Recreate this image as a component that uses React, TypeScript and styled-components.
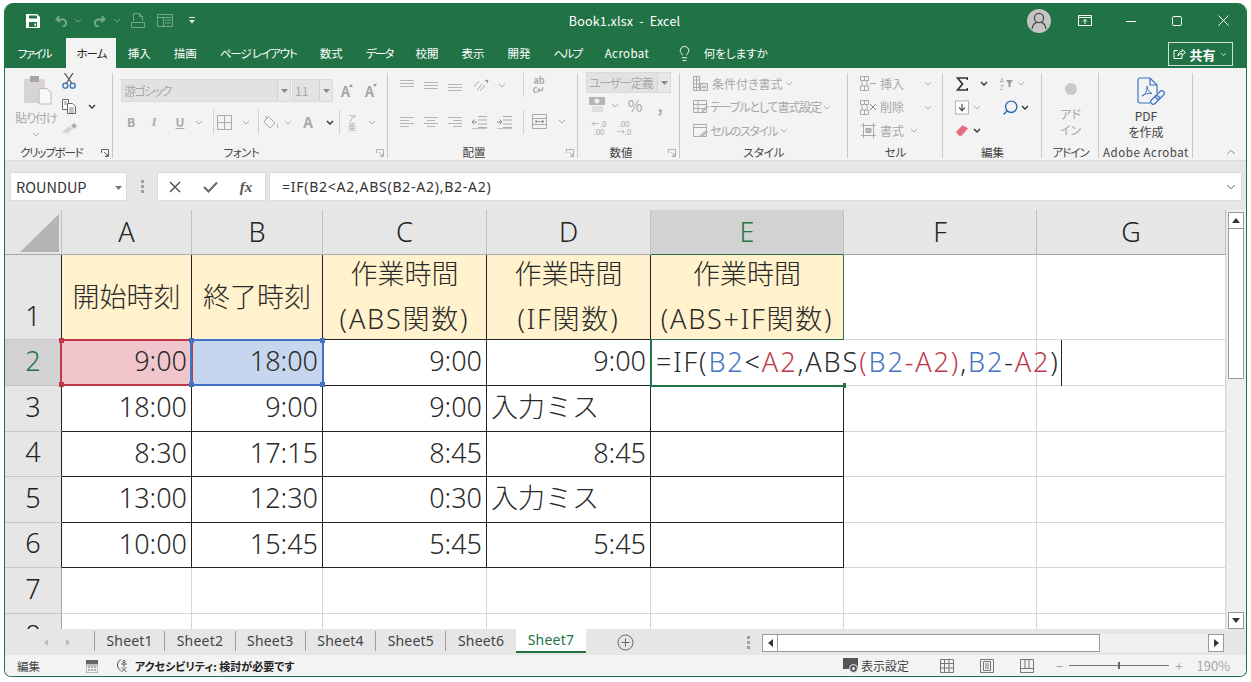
import React from "react";
import styled, { createGlobalStyle } from "styled-components";
import { Lightbulb, Search, ChevronDown, ChevronUp } from "lucide-react";

const FONT = `"Noto Sans CJK JP", "Noto Sans", sans-serif`;
const CELLFONT = `"Noto Sans", "Noto Sans CJK JP", sans-serif`;
const GREEN = "#217346";
const DIM = "#a8a8a8";

const Global = createGlobalStyle`
  html, body { margin: 0; padding: 0; background: #fff; font-family: ${FONT}; }
  * { box-sizing: border-box; }
`;

const Win = styled.div`
  width: 1243px; height: 674px; margin: 3px 0 0 4px; border: 1px solid ${GREEN}; border-top: 0;
  border-radius: 9px 9px 7px 7px; overflow: hidden; display: flex; flex-direction: column; background: #f3f3f3;
  position: relative; font-feature-settings: "palt";
`;
const TitleBar = styled.div`
  height: 35px; flex: none; background: ${GREEN}; color: #fff; display: grid;
  grid-template-columns: 1fr auto 1fr; align-items: center; font-size: 12.5px;
`;
const Qat = styled.div`display: flex; align-items: center; padding-left: 16px;`;
const QatSlot = styled.span<{ $w: number; $ml?: number }>`width: ${p => p.$w}px; margin-left: ${p => p.$ml || 0}px; display: flex; justify-content: center; align-items: center; flex: none;`;
const Title = styled.div`letter-spacing: .2px; white-space: pre; padding-right: 2px;`;
const WinControls = styled.div`display: flex; align-items: center; justify-content: flex-end;`;
const WinSlot = styled.span<{ $w: number }>`width: ${p => p.$w}px; display: flex; justify-content: center; align-items: center;`;
const Avatar = styled.span`
  width: 24px; height: 24px; border-radius: 50%; background: #c4c4c4; display: flex; align-items: center; justify-content: center; margin-right: 11px;
`;

const TabRow = styled.div`height: 30px; flex: none; background: ${GREEN}; display: flex; padding-left: 1px; position: relative;`;
const Tab = styled.div<{ $active?: boolean; $ls?: number }>`
  padding: 0 ${p => p.$active ? 10 : 11.5}px; height: 30px; line-height: 30px; font-size: 11.5px; white-space: nowrap; flex: none;
  letter-spacing: ${p => p.$ls || 0}px;
  color: ${p => p.$active ? "#222" : "#fff"}; background: ${p => p.$active ? "#f3f3f3" : "transparent"};
  ${p => p.$active ? "margin-left: 4px;" : ""}
`;
const TellMe = styled.div`display: flex; align-items: center; gap: 11px; color: #fff; font-size: 11.5px; margin-left: 15px;`;
const Share = styled.div`
  position: absolute; right: 13px; top: 4px; width: 65px; height: 24px; border: 1px solid #cfe0d6; color: #fff;
  display: flex; align-items: center; justify-content: center; gap: 3px; font-size: 13px; font-weight: 700;
`;

const Ribbon = styled.div`height: 93px; flex: none; display: flex; background: #f3f3f3; border-bottom: 1px solid #dcdcdc; position: relative;`;
const Group = styled.div<{ $w: number }>`
  width: ${p => p.$w}px; flex: none; display: flex; flex-direction: column; position: relative;
  &::after { content: ""; position: absolute; right: 0; top: 5px; bottom: 2px; width: 1px; background: #c8c8c8; }
`;
const GroupBody = styled.div`flex: 1; display: flex; min-height: 0;`;
const GroupLabel = styled.div<{ $pl?: number; $pr?: number; $ls?: number }>`
  height: 19px; padding-top: 4px; line-height: 15px; font-size: 11.5px; color: #444; white-space: nowrap;
  text-align: ${p => p.$pl ? "left" : "center"}; padding-left: ${p => p.$pl || 0}px; padding-right: ${p => p.$pr || 0}px;
  letter-spacing: ${p => p.$ls || 0}px;
`;
const Launcher = styled.span`position: absolute; right: 4px; bottom: 3px; line-height: 0;`;
const Col = styled.div<{ $w?: number; $pad?: number; $top?: number }>`
  display: flex; flex-direction: column; flex: none;
  ${p => p.$w ? `width:${p.$w}px;` : ""} ${p => p.$pad ? `padding-left:${p.$pad}px;` : ""} ${p => p.$top ? `padding-top:${p.$top}px;` : ""}
`;
const Row = styled.div<{ $h: number }>`height: ${p => p.$h}px; display: flex; align-items: center; flex: none;`;
const Slot = styled.span<{ $w: number; $pl?: number }>`width: ${p => p.$w}px; padding-left: ${p => p.$pl || 0}px; flex: none; display: flex; justify-content: center; align-items: center; line-height: 0;`;
const VLine = styled.span`width: 1px; height: 24px; background: #d2d2d2; flex: none;`;
const Dim = styled.span<{ $size?: number; $dark?: boolean; $w?: number; $bold?: boolean; $ml?: number; $ls?: number }>`
  font-size: ${p => p.$size || 12}px; color: ${p => p.$dark ? "#555" : DIM}; white-space: nowrap; line-height: 14px;
  letter-spacing: ${p => p.$ls || 0}px;
  ${p => p.$bold ? "font-weight:700;" : ""} ${p => p.$w ? `width:${p.$w}px;` : ""} ${p => p.$ml ? `margin-left:${p.$ml}px;` : ""}
`;
const TinyNum = styled(Dim)`font-size: 8px; line-height: 8px; white-space: normal; width: 16px; text-align: center;`;
const WrapIco = styled(Dim)`font-size: 9px; line-height: 9px; white-space: normal; width: 14px; text-align: center;`;
const Phonetic = styled(Dim)`font-size: 8px; line-height: 9px; white-space: normal; width: 10px; text-align: center;`;
const ItalicMark = styled(Dim)`font-style: italic; font-family: "Liberation Serif", serif;`;
const UnderMark = styled(Dim)`text-decoration: underline;`;
const Combo = styled.div<{ $w: number; $h: number; $ml?: number; $ls?: number }>`
  width: ${p => p.$w}px; height: ${p => p.$h}px; margin-left: ${p => p.$ml || 0}px; background: #e2e2e2; border: 1px solid #dadada; flex: none; display: flex; align-items: center; font-size: 12px; color: ${DIM}; padding-left: 2px; position: relative; white-space: nowrap;
  letter-spacing: ${p => p.$ls || 0}px;
`;
const ComboArrow = styled.span`
  position: absolute; right: 0; top: 0; bottom: 0; width: 13px; background: #e8e8e8; border-left: 1px solid #d2d2d2; display: flex; align-items: center; justify-content: center;
`;
const Stack = styled.div<{ $top: number; $dark?: boolean }>`
  width: 100%; position: relative; padding-top: ${p => p.$top}px; display: flex; flex-direction: column; align-items: center;
  font-size: 12px; line-height: 15.5px; color: ${p => p.$dark ? "#444" : DIM}; text-align: center; white-space: nowrap;
`;
const AddinDotEl = styled.span`position: absolute; top: 15px; left: 50%; margin-left: -6px; width: 12px; height: 12px; border-radius: 50%; background: #c9c9c9;`;
const Collapse = styled.span`position: absolute; right: 8px; bottom: 1px; line-height: 0;`;
const PdfWrap = styled.span`margin-left: 9px; line-height: 0; margin-bottom: 2px;`;

const FormulaRow = styled.div`height: 49px; flex: none; background: #e6e6e6; display: flex; align-items: flex-start; padding: 11px 0 0 5px;`;
const NameBox = styled.div`
  width: 117px; height: 29px; background: #fff; border: 1px solid #dcdcdc; display: flex; align-items: center; padding-left: 5px; font-size: 14.5px; color: #333; position: relative;
`;
const ComboTri = styled.span`position: absolute; right: 4px; top: 11px; line-height: 0;`;
const Grip = styled.div`width: 30px; display: flex; justify-content: center; align-items: center; height: 29px;`;
const FxBox = styled.div`
  width: 109px; height: 29px; background: #fff; border: 1px solid #dcdcdc; display: flex; align-items: center;
`;
const FormulaInput = styled.div`
  margin-left: 3px; width: 973px; height: 29px; background: #fff; border: 1px solid #dcdcdc; display: flex; align-items: center; padding-left: 12px; font-family: ${CELLFONT}; font-size: 14px; color: #333; position: relative; letter-spacing: .75px;
`;
const FormulaArrow = styled.span`position: absolute; right: 3px; top: 7px; line-height: 0;`;

const SheetArea = styled.div`height: 419px; flex: none; display: flex; background: #fff;`;
const Grid = styled.div`
  width: 1221px; height: 419px; overflow: hidden; display: grid; flex: none;
  grid-template-columns: 57px 130px 131px 164px 164px 193px 193px 189px;
  grid-template-rows: 45px 85px 46px 46px 45px 46px 45px 46px 46px;
  font-family: ${CELLFONT}; font-size: 27px; color: #2a2a2a; font-weight: 300; font-feature-settings: normal;
`;
const Corner = styled.div`background: #e6e6e6; border-right: 1px solid #c0c0c0; border-bottom: 1px solid #a8a8a8; position: relative;`;
const CornerTri = styled.span`
  position: absolute; right: 2px; bottom: 2px; width: 0; height: 0; border-left: 39px solid transparent; border-bottom: 38px solid #b5b5b5;
`;
const ColHead = styled.div<{ $sel?: boolean }>`
  background: ${p => p.$sel ? "#d2d2d2" : "#e6e6e6"}; color: ${p => p.$sel ? GREEN : "#222"};
  border-right: 1px solid #c0c0c0; border-bottom: 1px solid ${p => p.$sel ? GREEN : "#a8a8a8"};
  display: flex; align-items: center; justify-content: center; line-height: 1; padding-bottom: 2px;
`;
const RowHead = styled.div<{ $sel?: boolean; $boxed?: boolean; $bottom?: boolean }>`
  background: ${p => p.$sel ? "#d2d2d2" : "#e6e6e6"}; color: ${p => p.$sel ? GREEN : "#222"};
  border-right: 1px solid ${p => p.$sel ? GREEN : p.$boxed ? "#222" : "#a8a8a8"}; border-bottom: 1px solid #c6c6c6;
  display: flex; align-items: ${p => p.$bottom ? "flex-end" : "center"}; justify-content: center; line-height: 44px; padding-bottom: ${p => p.$bottom ? 1 : 4}px;
`;
const Cell = styled.div<{ $bg?: string; $line?: string; $align?: string; $boxed?: boolean }>`
  position: relative; background: ${p => p.$bg || "#fff"}; white-space: nowrap; line-height: 45px;
  border-right: 1px solid ${p => p.$line || (p.$boxed ? "#222" : "#d6d6d6")}; border-bottom: 1px solid ${p => p.$line || (p.$boxed ? "#222" : "#d6d6d6")};
  display: flex; flex-direction: column; justify-content: center;
  align-items: ${p => p.$align === "right" ? "flex-end" : p.$align === "center" ? "center" : "flex-start"};
  padding: 0 4px 4px;
`;
const HeadCell = styled(Cell)`padding-bottom: 2px;`;
const HeadLine = styled.span<{ $wide?: boolean }>`letter-spacing: ${p => p.$wide ? 1.8 : 0}px;`;
const EditCell = styled(Cell)`
  z-index: 2; overflow: visible; background: transparent; border-right: 0; padding-left: 5px; border-bottom: 0;
`;
const EditText = styled.span`z-index: 3; letter-spacing: 1.85px;`;
const Ref = styled.span<{ $c: string }>`color: ${p => p.$c};`;
const Caret = styled.span`position: absolute; top: 0; bottom: 0; left: 410px; width: 1px; background: #222;`;
const RangeMark = styled.span<{ $c: string }>`
  position: absolute; left: -2px; right: -2px; top: -1px; bottom: -1px; border: 2px solid ${p => p.$c}; pointer-events: none; z-index: 2;
`;
const Handle = styled.i<{ $c: string; $x: "l" | "r"; $y: "t" | "b" }>`
  position: absolute; width: 5px; height: 5px; background: ${p => p.$c}; ${p => p.$x === "l" ? "left:-3px;" : "right:-3px;"} ${p => p.$y === "t" ? "top:-3px;" : "bottom:-3px;"}
`;
const EditMark = styled.span`
  position: absolute; left: -1px; top: -1px; width: 194px; bottom: -1px; border-left: 2px solid ${GREEN}; border-bottom: 2px solid ${GREEN}; z-index: 2;
`;
const EditOuter = styled.span`
  position: absolute; right: -2px; bottom: -3px; width: 3px; height: 5px; background: ${GREEN};
`;

const VScroll = styled.div`width: 20px; flex: none; background: #f0f0f0; display: flex; flex-direction: column; padding: 2px 2px 0 1px; border-left: 1px solid #e6e6e6;`;
const ScrollBtn = styled.div`
  height: 17px; background: #fff; border: 1px solid #9a9a9a; display: flex; align-items: center; justify-content: center; flex: none;
`;
const VThumb = styled.div`height: 150px; background: #fff; border: 1px solid #9a9a9a; border-top: 0; flex: none;`;
const VTrack = styled.div`flex: 1;`;

const SheetRow = styled.div`height: 26px; flex: none; background: #e6e6e6; display: flex; align-items: flex-start; position: relative;`;
const NavArrows = styled.div`width: 89px; display: flex; justify-content: center; gap: 18px; height: 26px; align-items: center; padding-left: 15px; flex: none;`;
const SheetTab = styled.div<{ $active?: boolean }>`
  width: 70.3px; flex: none; text-align: center; font-family: ${CELLFONT}; font-size: 14px; letter-spacing: .2px; color: ${p => p.$active ? GREEN : "#444"};
  ${p => p.$active
    ? `height: 24px; line-height: 21px; background: #fff; border-bottom: 2px solid ${GREEN};`
    : "height: 20px; margin-top: 2px; line-height: 19px; border-left: 1px solid #9e9e9e;"}
`;
const AddSheet = styled.span`margin-left: 31px; height: 26px; display: flex; align-items: center; flex: none;`;
const HScroll = styled.div`margin-left: 12px; display: flex; align-items: center; height: 18px; margin-top: 5px; background: #f0f0f0; width: 462px; flex: none;`;
const HBtn = styled.div`width: 16px; height: 18px; background: #fff; border: 1px solid #9a9a9a; display: flex; align-items: center; justify-content: center; flex: none;`;
const HThumb = styled.div`width: 322px; height: 18px; background: #fff; border: 1px solid #9a9a9a; border-left: 0; flex: none;`;
const HTrack = styled.div`flex: 1;`;
const HGrip = styled.span`margin-left: 113px; height: 26px; display: flex; align-items: center;`;

const StatusBar = styled.div`flex: 1; background: #f3f3f3; display: flex; align-items: center; font-size: 11.5px; color: #444; padding-left: 12px;`;
const StatusGroup = styled.div<{ $gap?: number; $ml?: number }>`display: flex; align-items: center; gap: ${p => p.$gap || 0}px; margin-left: ${p => p.$ml || 0}px; flex: none;`;
const StatusBold = styled.span`font-size: 11px; color: #222; font-weight: 700; white-space: nowrap;`;
const StatusText = styled.span`font-size: 12px;`;
const Zoom = styled.span`font-size: 13px; color: ${DIM};`;
const SliderTrack = styled.span`width: 100px; height: 1px; background: #777; position: relative; display: block;`;
const SliderThumb = styled.i`position: absolute; left: 49px; top: -3px; width: 2px; height: 7px; background: #666;`;
const FxText = styled.span`font-family: "Liberation Serif", serif; font-style: italic; font-size: 15px; color: #555; font-weight: 700;`;
const FontABox = styled.span`position: relative; display: inline-block; line-height: 14px; font-size: 14px; color: #a4a4a4; font-weight: 700;`;
const FontACaret = styled.svg`position: absolute; right: -3px; top: 0;`;
const MirrorSearch = styled(Search)`transform: scaleX(-1);`;

/* ---------- icons ---------- */
const Chev = ({ dark, c }: { dark?: boolean; c?: string }) => (
  <svg width="8" height="5" viewBox="0 0 8 5"><path d="M1 1l3 3 3-3" fill="none" stroke={c || (dark ? "#333" : "#aaa")} strokeWidth={dark ? 1.4 : 1} /></svg>
);
const Tri = ({ c = "#8a8a8a" }: { c?: string }) => <svg width="7" height="4" viewBox="0 0 7 4"><path d="M0 0h7L3.5 4z" fill={c} /></svg>;
const LaunchIco = ({ dark }: { dark?: boolean }) => (
  <svg width="8" height="8" viewBox="0 0 8 8" fill="none" stroke={dark ? "#555" : "#aaa"} strokeWidth=".9"><path d="M.5 4V.5h7v7H4M3 3l4 4M7 4.5V7H4.5" /></svg>
);
const Lines = ({ a, w = 14 }: { a: "l" | "c" | "r" | "tt" | "tm" | "tb"; w?: number }) => {
  const ys = a === "tt" ? [2, 5, 8] : a === "tm" ? [4, 7, 10] : a === "tb" ? [6, 9, 12] : [2, 5, 8, 11];
  return <svg width={w} height="14" viewBox="0 0 14 14" stroke="#b5b5b5" strokeWidth="1">
    {ys.map((y, i) => {
      const short = a.startsWith("t") ? false : i % 2 === 1;
      const x1 = a === "r" && short ? 5 : a === "c" && short ? 3 : 0;
      const x2 = a === "l" && short ? 9 : a === "c" && short ? 11 : 14;
      return <path key={y} d={`M${x1} ${y + .5}H${x2}`} />;
    })}
  </svg>;
};
const Floppy = () => (
  <svg width="14" height="14" viewBox="0 0 14 14"><path d="M0 0h11l3 3v11H0z" fill="#fff" /><path d="M3 1.500h8v3H3zM3 8h8v5H3z" fill={GREEN} /><path d="M8.500 9.500h1.500v2.500H8.500z" fill="#fff" /></svg>
);
const UndoSvg = styled.svg<{ $flip?: boolean }>`${p => p.$flip ? "transform: scaleX(-1);" : ""}`;
const Undo = ({ flip }: { flip?: boolean }) => (
  <UndoSvg $flip={flip} width="15" height="12" viewBox="0 0 15 12" fill="none" stroke="#75a78b" strokeWidth="2"><path d="M4 1L1.500 4.500 5 7M2 4.500h7a4 4 0 0 1 0 7H7" /></UndoSvg>
);
const NewDoc = () => (
  <svg width="14" height="15" viewBox="0 0 14 15" fill="none" stroke="#75a78b"><path d="M2.500 8V.5h6l3 3V8M8.500.5v3h3M.5 9.500h13v5H.5z" /></svg>
);
const FormIco = () => (
  <svg width="16" height="13" viewBox="0 0 16 13" fill="none" stroke="#75a78b"><path d="M.5.5h15v12H.5zM.5 3.500h15M6.500 3.500v9M8 6h6M8 9h6" /></svg>
);
const QatMore = () => <svg width="6" height="7" viewBox="0 0 6 7" fill="#dfeee6"><path d="M0 0h6v1H0zM0 3h6L3 6.500z" /></svg>;
const Person = () => (
  <svg width="16" height="18" viewBox="0 0 16 18" fill="none" stroke="#4a4a4a" strokeWidth="1.300"><circle cx="8" cy="6" r="4.600" /><path d="M1 17c.5-4 3-6 4.500-6.600M15 17c-.5-4-3-6-4.500-6.600" /></svg>
);
const RibbonDisp = () => (
  <svg width="14" height="11" viewBox="0 0 14 11" fill="none" stroke="#fff"><path d="M.5.5h13v10H.5zM.5 2.500h13M7 9V4.500M5 6.500l2-2 2 2" /></svg>
);
const Minimize = () => <svg width="10" height="10" viewBox="0 0 10 10"><path d="M0 5.500h10" stroke="#fff" /></svg>;
const Maximize = () => <svg width="10" height="10" viewBox="0 0 10 10"><rect x=".5" y=".5" width="9" height="9" rx="1.200" fill="none" stroke="#fff" /></svg>;
const Close = () => <svg width="11" height="11" viewBox="0 0 11 11"><path d="M.5.5l10 10M10.500.5l-10 10" stroke="#fff" /></svg>;
const ShareIco = () => (
  <svg width="13" height="12" viewBox="0 0 13 12" fill="none" stroke="#fff"><path d="M5 2.500H1v8h8V8M5 8c0-3 2-4.500 4-4.500V1.500l3.500 3-3.500 3V5.500C7.500 5.500 6 6.500 5 8z" /></svg>
);
const Paste = () => (
  <svg width="28" height="30" viewBox="0 0 28 30"><rect x="0" y="4" width="21" height="24" rx="1" fill="#d8d4d5" /><rect x="6" y="1" width="9" height="6" fill="#a9a4a6" /><path d="M15 13.500h8l4 4V29H15z" fill="#f8f8f8" stroke="#b8b8b8" /></svg>
);
const Cut = () => (
  <svg width="14" height="16" viewBox="0 0 14 16" fill="none"><path d="M2.500 0l7 10M11 0L4.500 10" stroke="#555" strokeWidth="1.300" /><circle cx="3.300" cy="12.700" r="2.500" stroke="#2f6db0" strokeWidth="1.300" /><circle cx="10.700" cy="12.700" r="2.500" stroke="#2f6db0" strokeWidth="1.300" /></svg>
);
const Copy = () => (
  <svg width="14" height="15" viewBox="0 0 14 15" fill="#fff" stroke="#666"><path d="M.5.5h6v10h-6z" /><path d="M5.500 4.500h5l3 3v7h-8z" /><path d="M7 9h5M7 11h5M7 13h5M2 3h3M2 5h3" stroke="#888" /></svg>
);
const Painter = () => (
  <svg width="15" height="11" viewBox="0 0 15 11"><path d="M0 9l7-6 3 3-4 4.500z" fill="#d8d2d4" /><path d="M9 3l3-3 3 3-3 3z" fill="#b2acae" /></svg>
);
const Borders = () => (
  <svg width="15" height="15" viewBox="0 0 15 15" fill="none" stroke="#aaa"><path d="M.5.5h14v14H.5zM7.500.5v14M.5 7.500h14" /></svg>
);
const Fill = () => (
  <svg width="17" height="15" viewBox="0 0 17 15" fill="none" stroke="#aaa"><path d="M6 1l7 7-5 5-6-6zM3 1l3 3" /><path d="M15 9c1 2 1.500 3 0 4" /></svg>
);
const FontA = ({ up }: { up?: boolean }) => (
  <FontABox>A
    <FontACaret width="4" height="3" viewBox="0 0 4 3"><path d={up ? "M0 3l2-3 2 3z" : "M0 0h4L2 3z"} fill="#999" /></FontACaret>
  </FontABox>
);
const Orient = () => (
  <svg width="16" height="13" viewBox="0 0 16 13" fill="none" stroke="#aaa"><path d="M1 8l5-6M4 11l5-6M7 12l5-6" /><path d="M12 2l3-1-1 3" stroke="#888" /></svg>
);
const Indent = ({ out }: { out?: boolean }) => (
  <svg width="15" height="14" viewBox="0 0 15 14" fill="none" stroke="#aaa"><path d="M6 1.500h9M6 5h9M6 9h9M6 12.500h9" /><path d={out ? "M5 7H0M2.500 4.500L0 7l2.500 2.500" : "M0 7h5M2.500 4.500L5 7 2.500 9.500"} stroke="#888" /><path d="M0 13.500h15" stroke="#c2c2c2" /></svg>
);
const Merge = () => (
  <svg width="15" height="15" viewBox="0 0 15 15" fill="none" stroke="#aaa"><path d="M.5.5h14v14H.5zM.5 4.500h14M.5 10.500h14" /><path d="M3 7.500h9M5 6L3 7.500 5 9M10 6l2 1.500L10 9" stroke="#999" /></svg>
);
const Currency = () => (
  <svg width="17" height="16" viewBox="0 0 17 16"><rect x="0" y="0" width="16" height="8" fill="#b4b4b4" /><circle cx="8" cy="4" r="2.500" fill="#eee" /><path d="M3 10h11M3 12h11M3 14h11" stroke="#ccc" /></svg>
);
const Cond = () => (
  <svg width="15" height="15" viewBox="0 0 15 15" fill="none" stroke="#aaa"><path d="M.5.5h6v14h-6zM.5 4h6M.5 8h6M.5 11.500h6M3.500.5v14" /><path d="M7.500 7.500h7v7h-7z" fill="#e6e6e6" /><path d="M9 11h4" stroke="#888" /></svg>
);
const TableIco = () => (
  <svg width="16" height="14" viewBox="0 0 16 14" fill="none" stroke="#aaa"><path d="M.5.5h13v12H.5zM.5 4.500h13M.5 8.500h13M5 .5v12" /><path d="M8 11l6-6 2 1.500-6 6z" fill="#bbb" stroke="none" /></svg>
);
const StyleIco = () => (
  <svg width="16" height="14" viewBox="0 0 16 14" fill="none" stroke="#aaa"><path d="M.5.5h13v12H.5zM.5 3.500h13" /><path d="M6 12l7-6 2.500 1.500-6 6z" fill="#bbb" stroke="none" /></svg>
);
const Insert = () => (
  <svg width="16" height="15" viewBox="0 0 16 15" fill="none" stroke="#aaa"><path d="M.5.5h8v4h-8zM.5 10h8v4.500h-8zM4.500.5v4M4.500 10v4.500M2 5v5M7 5v5M10 7.500h6" /></svg>
);
const Delete = () => (
  <svg width="17" height="15" viewBox="0 0 17 15" fill="none" stroke="#aaa"><path d="M.5.5h8v4h-8zM.5 10h8v4.500h-8zM4.500.5v4M4.500 10v4.500M2 5v5M7 5v5" /><path d="M10 4l6 6M16 4l-6 6" stroke="#888" /></svg>
);
const FormatCell = () => (
  <svg width="15" height="15" viewBox="0 0 15 15" fill="none" stroke="#aaa"><path d="M2.500 2.500h10v10h-10zM0 2.500h15M0 12.500h15M2.500 0v15M12.500 0v15" /><path d="M5 5.500h5v4H5z" fill="#bbb" /></svg>
);
const Sum = () => (
  <svg width="12" height="14" viewBox="0 0 12 14" fill="none" stroke="#333" strokeWidth="1.700"><path d="M11.500 3V1H1.500L6.500 7l-5 6h10v-2" /></svg>
);
const Sort = () => (
  <svg width="13" height="13" viewBox="0 0 13 13"><text x="0" y="6" fontSize="6" fill="#999" fontFamily={FONT}>A</text><text x="0" y="12.500" fontSize="6" fill="#999" fontFamily={FONT}>Z</text><path d="M6 3h7L10.500 6.500V10h-2V6.500z" fill="#999" /></svg>
);
const FillDown = () => (
  <svg width="15" height="15" viewBox="0 0 15 15" fill="#fff" stroke="#aaa"><path d="M.5.5h14v14H.5z" /><path d="M7.500 3.500v7M4.500 7.500l3 3.500 3-3.500" fill="none" stroke="#555" strokeWidth="1.300" /></svg>
);
const Eraser = () => (
  <svg width="15" height="13" viewBox="0 0 15 13"><path d="M1 8l7-7 6 3-7 8H4z" fill="#e46c7c" /></svg>
);
const PdfIco = () => (
  <svg width="28" height="29" viewBox="0 0 28 29" fill="none" stroke="#3e73c4" strokeWidth="1.200">
    <path d="M13 26H3a2 2 0 0 1-2-2V3a2 2 0 0 1 2-2h10l7 7v8" /><path d="M13 1v7h7" />
    <path d="M5 19c3-1 5.500-5 5-10 0 3 2 6.500 5 7.500-3-.5-7.500 0-10 2.500z" strokeWidth="1" />
    <rect x="13" y="20.500" width="10" height="5" rx="2.500" transform="rotate(-45 18 23)" />
    <rect x="18" y="15.500" width="10" height="5" rx="2.500" transform="rotate(-45 23 18)" />
  </svg>
);
const GripDots = () => <svg width="3" height="13" viewBox="0 0 3 13" fill="#a0a0a0"><rect width="3" height="3" /><rect y="5" width="3" height="3" /><rect y="10" width="3" height="3" /></svg>;
const CancelX = () => <svg width="12" height="12" viewBox="0 0 12 12"><path d="M1 1l10 10M11 1L1 11" stroke="#555" strokeWidth="1.500" /></svg>;
const Check = () => <svg width="15" height="12" viewBox="0 0 15 12"><path d="M1 6l4.500 4.500L14 1.500" stroke="#666" strokeWidth="2" fill="none" /></svg>;
const ArrowBox = ({ d }: { d: "u" | "d" | "l" | "r" }) => {
  const p = { u: "M0 5h8L4 0z", d: "M0 0h8L4 5z", l: "M5 0v8L0 4z", r: "M0 0v8l5-4z" }[d];
  const hz = d === "u" || d === "d";
  return <svg width={hz ? 8 : 5} height={hz ? 5 : 8} viewBox={hz ? "0 0 8 5" : "0 0 5 8"}><path d={p} fill="#333" /></svg>;
};
const Nav = ({ flip }: { flip?: boolean }) => <svg width="4" height="7" viewBox="0 0 4 7"><path d={flip ? "M0 0l4 3.500L0 7z" : "M4 0L0 3.500 4 7z"} fill="#bbb" /></svg>;
const PlusCircle = () => <svg width="17" height="17" viewBox="0 0 17 17" fill="none" stroke="#666"><circle cx="8.500" cy="8.500" r="7.500" /><path d="M8.500 4.500v8M4.500 8.500h8" /></svg>;
const Macro = () => <svg width="12" height="14" viewBox="0 0 12 14"><rect y="1" width="12" height="4" fill="#666" /><rect y="6" width="12" height="8" fill="none" stroke="#888" /><path d="M2 8h2M5 8h2M8 8h2M2 11h2M5 11h2M8 11h2" stroke="#666" /></svg>;
const Access = () => <svg width="15" height="15" viewBox="0 0 15 15" fill="none" stroke="#555"><path d="M5 1.500a6 6 0 0 0 0 11" /><circle cx="8" cy="3.500" r="1.200" /><path d="M5 6h6M8 6v3M5.500 9l5 5M10.500 9l-5 5" /></svg>;
const DisplaySet = () => <svg width="16" height="15" viewBox="0 0 16 15"><rect width="15" height="11" fill="#555" /><circle cx="10.500" cy="10.500" r="4" fill="#555" stroke="#f3f3f3" /><circle cx="10.500" cy="10.500" r="1.500" fill="#f3f3f3" /></svg>;
const ViewNormal = () => <svg width="14" height="14" viewBox="0 0 14 14" fill="none" stroke="#777"><path d="M.5.5h13v13H.5zM4.500.5v13M9 .5v13M.5 4.500h13M.5 9h13" /></svg>;
const ViewPage = () => <svg width="14" height="14" viewBox="0 0 14 14" fill="none" stroke="#777"><path d="M.5.5h13v13H.5zM3.500 2.500h7v9h-7zM5 5h4M5 7h4M5 9h4" /></svg>;
const ViewBreak = () => <svg width="14" height="14" viewBox="0 0 14 14" fill="none" stroke="#777"><path d="M.5.5h13v13H.5zM.5 9.500h13M5 .5v9M9 .5v9" /></svg>;

/* ---------- data ---------- */
const TABS: { t: string; ls?: number }[] = [
  { t: "挿入" }, { t: "描画" }, { t: "ページ レイアウト", ls: -1.1 }, { t: "数式" }, { t: "データ", ls: -1.8 },
  { t: "校閲" }, { t: "表示" }, { t: "開発" }, { t: "ヘルプ", ls: -1.6 }, { t: "Acrobat", ls: .4 },
];
const SHEETS = ["Sheet1", "Sheet2", "Sheet3", "Sheet4", "Sheet5", "Sheet6", "Sheet7"];
const COLS = ["A", "B", "C", "D", "E", "F", "G"];
const HEAD: string[][] = [["開始時刻"], ["終了時刻"], ["作業時間", "(ABS関数)"], ["作業時間", "(IF関数)"], ["作業時間", "(ABS+IF関数)"]];
const BODY: [string, string, string, string][] = [
  ["18:00", "9:00", "9:00", "入力ミス"],
  ["8:30", "17:15", "8:45", "8:45"],
  ["13:00", "12:30", "0:30", "入力ミス"],
  ["10:00", "15:45", "5:45", "5:45"],
];
const BLUE = "#4472c4";
const RED = "#c0394b";

const Marks = ({ c }: { c: string }) => (
  <RangeMark $c={c}>
    <Handle $c={c} $x="l" $y="t" /><Handle $c={c} $x="r" $y="t" /><Handle $c={c} $x="l" $y="b" /><Handle $c={c} $x="r" $y="b" />
  </RangeMark>
);

export default function App() {
  return (
    <>
      <Global />
      <Win>
        <TitleBar>
          <Qat>
            <QatSlot $w={24}><Floppy /></QatSlot>
            <QatSlot $w={22} $ml={6}><Undo /></QatSlot>
            <QatSlot $w={10}><Chev c="#75a78b" /></QatSlot>
            <QatSlot $w={30}><Undo flip /></QatSlot>
            <QatSlot $w={8}><Chev c="#75a78b" /></QatSlot>
            <QatSlot $w={34}><NewDoc /></QatSlot>
            <QatSlot $w={20}><FormIco /></QatSlot>
            <QatSlot $w={34}><QatMore /></QatSlot>
          </Qat>
          <Title>Book1.xlsx  -  Excel</Title>
          <WinControls>
            <Avatar><Person /></Avatar>
            <WinSlot $w={46}><RibbonDisp /></WinSlot>
            <WinSlot $w={46}><Minimize /></WinSlot>
            <WinSlot $w={46}><Maximize /></WinSlot>
            <WinSlot $w={46}><Close /></WinSlot>
          </WinControls>
        </TitleBar>
        <TabRow>
          <Tab $ls={-1.6}>ファイル</Tab>
          <Tab $active $ls={-1}>ホーム</Tab>
          {TABS.map(({ t, ls }) => <Tab key={t} $ls={ls}>{t}</Tab>)}
          <TellMe><Lightbulb size={17} strokeWidth={1.3} color="#fff" />何をしますか</TellMe>
          <Share><ShareIco />共有<ChevronDown size={9} strokeWidth={2} color="#fff" /></Share>
        </TabRow>
        <Ribbon>
          <Group $w={108}>
            <GroupBody>
              <Col $w={57} $top={1}>
                <Row $h={42}><Slot $w={57} $pl={9}><Paste /></Slot></Row>
                <Row $h={14}><Slot $w={57} $pl={5}><Dim $ls={-1}>貼り付け</Dim></Slot></Row>
                <Row $h={18}><Slot $w={57} $pl={5}><Chev /></Slot></Row>
              </Col>
              <Col $w={16}>
                <Row $h={26}><Slot $w={14}><Cut /></Slot></Row>
                <Row $h={25}><Slot $w={14}><Copy /></Slot></Row>
                <Row $h={18}><Slot $w={15}><Painter /></Slot></Row>
              </Col>
              <Col $w={28}>
                <Row $h={26} />
                <Row $h={25}><Slot $w={28}><Chev dark /></Slot></Row>
              </Col>
            </GroupBody>
            <GroupLabel $pl={15} $ls={-1.2}>クリップボード</GroupLabel>
            <Launcher><LaunchIco dark /></Launcher>
          </Group>
          <Group $w={275}>
            <GroupBody>
              <Col $pad={8} $top={11}>
                <Row $h={23}>
                  <Combo $w={170} $h={23} $ls={-1.6}>游ゴシック<ComboArrow><Tri /></ComboArrow></Combo>
                  <Combo $w={41} $h={23} $ml={1}>11<ComboArrow><Tri /></ComboArrow></Combo>
                  <Slot $w={25}><FontA up /></Slot>
                  <Slot $w={23}><FontA /></Slot>
                </Row>
                <Row $h={40}>
                  <Slot $w={20}><Dim $bold>B</Dim></Slot>
                  <Slot $w={26}><ItalicMark $bold>I</ItalicMark></Slot>
                  <Slot $w={26}><UnderMark $bold>U</UnderMark></Slot>
                  <Slot $w={12}><Chev /></Slot>
                  <Slot $w={8} />
                  <VLine />
                  <Slot $w={20}><Borders /></Slot>
                  <Slot $w={24}><Chev /></Slot>
                  <VLine />
                  <Slot $w={22}><Fill /></Slot>
                  <Slot $w={14}><Chev /></Slot>
                  <Slot $w={26}><Dim $size={15} $bold>A</Dim></Slot>
                  <Slot $w={18}><Chev dark /></Slot>
                  <VLine />
                  <Slot $w={24}><Phonetic>ア亜</Phonetic></Slot>
                  <Slot $w={16}><Chev /></Slot>
                </Row>
              </Col>
            </GroupBody>
            <GroupLabel $pr={18} $ls={-.5}>フォント</GroupLabel>
            <Launcher><LaunchIco /></Launcher>
          </Group>
          <Group $w={190}>
            <GroupBody>
              <Col $pad={7}>
                <Row $h={34}>
                  <Slot $w={24}><Lines a="tt" /></Slot>
                  <Slot $w={24}><Lines a="tm" /></Slot>
                  <Slot $w={24}><Lines a="tb" /></Slot>
                  <Slot $w={28}><Orient /></Slot>
                  <Slot $w={14}><Chev /></Slot>
                  <Slot $w={14} /><VLine />
                  <Slot $w={30}><WrapIco $bold>ab c↵</WrapIco></Slot>
                </Row>
                <Row $h={39}>
                  <Slot $w={24}><Lines a="l" /></Slot>
                  <Slot $w={24}><Lines a="c" /></Slot>
                  <Slot $w={24}><Lines a="r" /></Slot>
                  <Slot $w={25}><Indent out /></Slot>
                  <Slot $w={25}><Indent /></Slot>
                  <Slot $w={6} /><VLine />
                  <Slot $w={30}><Merge /></Slot>
                  <Slot $w={16}><Chev /></Slot>
                </Row>
              </Col>
            </GroupBody>
            <GroupLabel $pr={18}>配置</GroupLabel>
            <Launcher><LaunchIco /></Launcher>
          </Group>
          <Group $w={102}>
            <GroupBody>
              <Col $pad={8} $top={4}>
                <Row $h={21}>
                  <Combo $w={85} $h={21} $ls={-1.2}>ユーザー定義<ComboArrow><Tri /></ComboArrow></Combo>
                </Row>
                <Row $h={24}>
                  <Slot $w={22}><Currency /></Slot>
                  <Slot $w={14}><Chev /></Slot>
                  <Slot $w={26}><Dim $size={16}>%</Dim></Slot>
                  <Slot $w={24}><Dim $size={16} $bold>,</Dim></Slot>
                </Row>
                <Row $h={22}>
                  <Slot $w={26}><TinyNum>←.0 .00</TinyNum></Slot>
                  <Slot $w={24}><TinyNum>.00 →.0</TinyNum></Slot>
                </Row>
              </Col>
            </GroupBody>
            <GroupLabel $pr={16}>数値</GroupLabel>
            <Launcher><LaunchIco /></Launcher>
          </Group>
          <Group $w={168}>
            <GroupBody>
              <Col $pad={12} $top={4}>
                <Row $h={23}><Slot $w={17}><Cond /></Slot><Dim $ml={3}>条件付き書式</Dim><Slot $w={12}><Chev /></Slot></Row>
                <Row $h={24}><Slot $w={17}><TableIco /></Slot><Dim $ml={1} $ls={-1.1}>テーブルとして書式設定</Dim><Slot $w={12}><Chev /></Slot></Row>
                <Row $h={23}><Slot $w={17}><StyleIco /></Slot><Dim $ml={1} $ls={-1.4}>セルのスタイル</Dim><Slot $w={12}><Chev /></Slot></Row>
              </Col>
            </GroupBody>
            <GroupLabel>スタイル</GroupLabel>
          </Group>
          <Group $w={95}>
            <GroupBody>
              <Col $pad={11} $top={4}>
                <Row $h={23}><Slot $w={18}><Insert /></Slot><Dim $ml={3} $w={42}>挿入</Dim><Slot $w={12}><Chev /></Slot></Row>
                <Row $h={24}><Slot $w={18}><Delete /></Slot><Dim $ml={3} $w={42}>削除</Dim><Slot $w={12}><Chev /></Slot></Row>
                <Row $h={23}><Slot $w={18}><FormatCell /></Slot><Dim $ml={3} $w={28}>書式</Dim><Slot $w={12}><Chev /></Slot></Row>
              </Col>
            </GroupBody>
            <GroupLabel>セル</GroupLabel>
          </Group>
          <Group $w={99}>
            <GroupBody>
              <Col $pad={12} $top={4}>
                <Row $h={23}><Slot $w={14}><Sum /></Slot><Slot $w={30}><Chev dark /></Slot><Slot $w={14}><Sort /></Slot><Slot $w={16}><Chev /></Slot></Row>
                <Row $h={24}><Slot $w={14}><FillDown /></Slot><Slot $w={16}><Chev /></Slot><Slot $w={16} /><Slot $w={18}><MirrorSearch size={17} strokeWidth={2} color="#2f6db0" /></Slot><Slot $w={12}><Chev dark /></Slot></Row>
                <Row $h={23}><Slot $w={14}><Eraser /></Slot><Slot $w={16}><Chev dark /></Slot></Row>
              </Col>
            </GroupBody>
            <GroupLabel>編集</GroupLabel>
          </Group>
          <Group $w={57}>
            <GroupBody>
              <Stack $top={38}>
                <AddinDotEl />
                <span>アド</span><span>イン</span>
              </Stack>
            </GroupBody>
            <GroupLabel $ls={-1}>アドイン</GroupLabel>
          </Group>
          <Group $w={94}>
            <GroupBody>
              <Stack $top={9} $dark>
                <PdfWrap><PdfIco /></PdfWrap>
                <span>PDF</span><span>を作成</span>
              </Stack>
            </GroupBody>
            <GroupLabel $ls={.55}>Adobe Acrobat</GroupLabel>
          </Group>
          <Collapse><ChevronUp size={14} strokeWidth={1.2} color="#555" /></Collapse>
        </Ribbon>
        <FormulaRow>
          <NameBox>ROUNDUP<ComboTri><Tri c="#777" /></ComboTri></NameBox>
          <Grip><GripDots /></Grip>
          <FxBox>
            <Slot $w={34}><CancelX /></Slot>
            <Slot $w={36}><Check /></Slot>
            <Slot $w={36}><FxText>fx</FxText></Slot>
          </FxBox>
          <FormulaInput>=IF(B2&lt;A2,ABS(B2-A2),B2-A2)<FormulaArrow><ChevronDown size={14} strokeWidth={1.6} color="#555" /></FormulaArrow></FormulaInput>
        </FormulaRow>
        <SheetArea>
          <Grid>
            <Corner><CornerTri /></Corner>
            {COLS.map(c => <ColHead key={c} $sel={c === "E"}>{c}</ColHead>)}

            <RowHead $boxed $bottom>1</RowHead>
            {HEAD.map((lines, i) => (
              <HeadCell key={i} $bg="#fff2cc" $boxed $align="center" $line={i === 4 ? GREEN : undefined}>
                {lines.map((l, k) => <HeadLine key={l} $wide={k === 1}>{l}</HeadLine>)}
              </HeadCell>
            ))}
            <Cell /><Cell />

            <RowHead $sel>2</RowHead>
            <Cell $bg="#f0c6cc" $boxed $align="right">9:00<Marks c={RED} /></Cell>
            <Cell $bg="#c6d6ee" $boxed $align="right">18:00<Marks c={BLUE} /></Cell>
            <Cell $boxed $align="right">9:00</Cell>
            <Cell $boxed $align="right">9:00</Cell>
            <EditCell>
              <EditText>=IF(<Ref $c={BLUE}>B2</Ref>&lt;<Ref $c={RED}>A2</Ref>,ABS<Ref $c={RED}>(</Ref><Ref $c={BLUE}>B2</Ref><Ref $c={RED}>-A2)</Ref>,<Ref $c={BLUE}>B2</Ref>-<Ref $c={RED}>A2</Ref>)</EditText>
              <Caret />
              <EditMark><EditOuter /></EditMark>
            </EditCell>
            <Cell /><Cell />

            {BODY.map((r, i) => (
              <React.Fragment key={i}>
                <RowHead $boxed>{i + 3}</RowHead>
                {r.map((v, j) => (
                  <Cell key={j} $boxed $align={v === "入力ミス" ? "left" : "right"}>{v}</Cell>
                ))}
                <Cell $boxed />
                <Cell /><Cell />
              </React.Fragment>
            ))}

            {[7, 8].map(n => (
              <React.Fragment key={n}>
                <RowHead>{n}</RowHead>
                {COLS.map(c => <Cell key={c} />)}
              </React.Fragment>
            ))}
          </Grid>
          <VScroll>
            <ScrollBtn><ArrowBox d="u" /></ScrollBtn>
            <VThumb />
            <VTrack />
            <ScrollBtn><ArrowBox d="d" /></ScrollBtn>
          </VScroll>
        </SheetArea>
        <SheetRow>
          <NavArrows><Nav /><Nav flip /></NavArrows>
          {SHEETS.map((s, i) => <SheetTab key={s} $active={i === 6}>{s}</SheetTab>)}
          <AddSheet><PlusCircle /></AddSheet>
          <HGrip><GripDots /></HGrip>
          <HScroll>
            <HBtn><ArrowBox d="l" /></HBtn>
            <HThumb />
            <HTrack />
            <HBtn><ArrowBox d="r" /></HBtn>
          </HScroll>
        </SheetRow>
        <StatusBar>
          <span>編集</span>
          <StatusGroup $ml={46}><Macro /></StatusGroup>
          <StatusGroup $ml={18} $gap={4}><Access /><StatusBold>アクセシビリティ: 検討が必要です</StatusBold></StatusGroup>
          <StatusGroup $ml={549} $gap={2}><DisplaySet /><StatusText>表示設定</StatusText></StatusGroup>
          <StatusGroup $ml={31} $gap={26}><ViewNormal /><ViewPage /><ViewBreak /></StatusGroup>
          <StatusGroup $ml={22} $gap={6}>
            <Zoom>−</Zoom><SliderTrack><SliderThumb /></SliderTrack><Zoom>+</Zoom>
          </StatusGroup>
          <StatusGroup $ml={14}><Zoom>190%</Zoom></StatusGroup>
        </StatusBar>
      </Win>
    </>
  );
}
